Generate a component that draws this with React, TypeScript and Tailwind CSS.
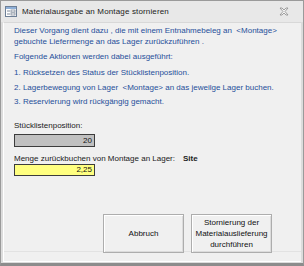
import React from 'react';

const blue = 'text-[#1f4f9a]';

function FormIcon() {
  return (
    <svg width="12" height="11" viewBox="0 0 12 11" className="shrink-0">
      <rect x="0.5" y="0.5" width="11" height="10" fill="#ffffff" stroke="#6d7f96" />
      <rect x="1" y="1" width="10" height="2" fill="#8fb0d8" />
      <rect x="2" y="4.5" width="3" height="1" fill="#7f8a99" />
      <rect x="6" y="4" width="4" height="2" fill="#ffffff" stroke="#7f8a99" strokeWidth="0.8" />
      <rect x="2" y="7.5" width="3" height="1" fill="#7f8a99" />
      <rect x="6" y="7" width="4" height="2" fill="#ffffff" stroke="#7f8a99" strokeWidth="0.8" />
    </svg>
  );
}

function CloseGlyph() {
  return (
    <svg width="10" height="9" viewBox="0 0 10 9">
      <path
        d="M1 1 L3 1 L5 3 L7 1 L9 1 L6 4.5 L9 8 L7 8 L5 6 L3 8 L1 8 L4 4.5 Z"
        fill="#f4f4f4"
        stroke="#8a8a8a"
        strokeWidth="0.8"
        strokeLinejoin="round"
      />
    </svg>
  );
}

function Button({ children }: { children: React.ReactNode }) {
  return (
    <button
      type="button"
      className="w-[81px] h-[39px] bg-[#f0f0f0] border border-[#adadad] shadow-[inset_1px_1px_0_#ffffff,inset_-1px_-1px_0_#dcdcdc] text-[8px] leading-[11px] text-[#111] flex items-center justify-center text-center px-1"
    >
      {children}
    </button>
  );
}

export default function App() {
  return (
    <div
      className="w-[304px] h-[266px] bg-[#dcdcdc] border border-[#9a9a9a] border-b-[3px] border-b-[#8c8c8c] flex flex-col overflow-hidden"
      style={{ fontFamily: '"Liberation Sans", Arial, sans-serif' }}
    >
      {/* Title bar */}
      <div className="h-[21px] flex items-center pl-[4px] pr-[14px] bg-[#e8e8e8] shrink-0">
        <FormIcon />
        <span className="ml-[5px] text-[8px] text-[#222] tracking-[0.15px]">
          Materialausgabe an Montage stornieren
        </span>
        <div className="ml-auto">
          <CloseGlyph />
        </div>
      </div>

      {/* Client area */}
      <div className="flex-1 mx-[2px] mb-[1px] bg-[#f0f0f0] border-l border-b border-white border-t border-t-[#d8d8d8] flex flex-col">
        <div className={`flex-1 flex flex-col pl-[10px] pt-[2px] text-[8px] leading-[11px] ${blue}`}>
          <p>Dieser Vorgang dient dazu , die mit einem Entnahmebeleg an &nbsp;&lt;Montage&gt;</p>
          <p>gebuchte Liefermenge an das Lager zurückzuführen .</p>
          <p className="mt-[4px]">Folgende Aktionen werden dabei ausgeführt:</p>
          <p className="mt-[5px]">1. Rücksetzen des Status der Stücklistenposition.</p>
          <p className="mt-[4px]">2. Lagerbewegung von Lager &nbsp;&lt;Montage&gt; an das jeweilge Lager buchen.</p>
          <p className="mt-[3px]">3. Reservierung wird rückgängig gemacht.</p>

          <p className="mt-[13px] text-[#1a1a1a]">Stücklistenposition:</p>
          <div className="mt-[3px] w-[81px] h-[13px] bg-[#c0c0c0] border border-[#3c3c3c] text-[#111] text-right pr-[2px] leading-[11px]">
            20
          </div>

          <div className="mt-[6px] flex text-[#1a1a1a]">
            <span>Menge zurückbuchen von Montage an Lager:</span>
            <span className="ml-[8px] font-bold text-[#222]">Site</span>
          </div>
          <div className="w-[81px] h-[12px] bg-[#ffff80] border border-[#3c3c3c] text-[#111] text-right pr-[2px] leading-[10px]">
            2,25
          </div>

          <div className="mt-auto flex gap-[7px] pl-[89px] -mb-[2px] relative z-10">
            <Button>Abbruch</Button>
            <Button>
              Stornierung der
              <br />
              Materialauslieferung
              <br />
              durchführen
            </Button>
          </div>
        </div>
        <div className="h-[10px] border-t border-[#e2e2e2] shrink-0" />
      </div>
    </div>
  );
}
